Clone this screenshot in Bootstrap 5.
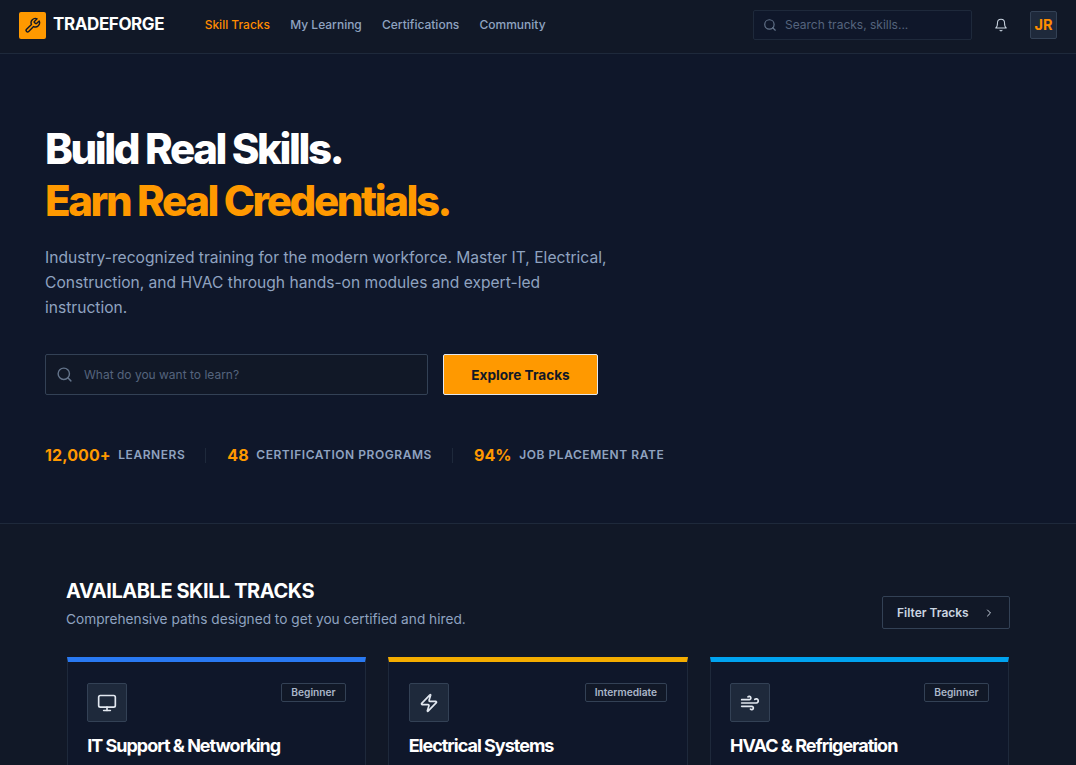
<!DOCTYPE html>
<html lang="en">
<head>
  <meta charset="UTF-8" />
  <meta name="viewport" content="width=device-width, initial-scale=1.0" />
  <title>TradeForge</title>
  <link href="https://cdn.jsdelivr.net/npm/bootstrap@5.3.0/dist/css/bootstrap.min.css" rel="stylesheet">
  <style>
    html, body { height: 765px; overflow: hidden; }
    body {
      font-family: Inter, "Liberation Sans", sans-serif;
      background: #111827;
      color: #8fa3c0;
    }
    .tf-nav {
      height: 54px;
      background: #111827;
      border-bottom: 1px solid #1e293b;
      padding: 0 19px 3px 19px;
    }
    .tf-logo {
      width: 27px;
      height: 27px;
      background: #ff9900;
      border-radius: 2px;
      color: #111827;
    }
    .tf-brand {
      color: #fff;
      font-size: 17px;
      font-weight: 700;
      letter-spacing: -0.4px;
      margin-left: 7px;
      margin-right: 40.5px;
    }
    .tf-navlinks { gap: 20.2px; }
    .tf-navlinks a {
      color: #8fa3c0;
      font-size: 12px;
      font-weight: 500;
      text-decoration: none;
    }
    .tf-navlinks a.on { color: #ff8c00; }
    .tf-search {
      width: 219px;
      height: 30px;
      background: #0f172a;
      border: 1px solid #1e293b;
      border-radius: 2px;
      padding-left: 9px;
      gap: 8px;
      font-size: 12px;
      color: #55647d;
    }
    .tf-avatar {
      width: 27px;
      height: 28px;
      background: #1e293b;
      border: 1px solid #334155;
      border-radius: 2px;
      color: #ff8c00;
      font-size: 14.5px;
      font-weight: 700;
      margin-left: 22px;
    }
    .tf-bell { margin-left: 22px; color: #cbd5e1; }
    .tf-hero {
      height: 470px;
      background: #0f172a;
      border-bottom: 1px solid #1e293b;
      padding: 69px 45px 0;
    }
    .tf-title {
      font-size: 42px;
      line-height: 52px;
      font-weight: 800;
      letter-spacing: -2.4px;
      color: #fff;
      margin: 0 0 18px;
    }
    .tf-title span { color: #ff9900; display: block; }
    .tf-lead {
      width: 570px;
      font-size: 15.6px;
      line-height: 25px;
      color: #8fa3c0;
      margin: 0 0 34px;
    }
    .tf-bigsearch {
      width: 383px;
      height: 41px;
      background: #111827;
      border: 1px solid #334155;
      border-radius: 2px;
      padding-left: 10px;
      gap: 11px;
      font-size: 12px;
      color: #55647d;
    }
    .tf-explore {
      width: 155px;
      height: 41px;
      margin-left: 15px;
      padding: 1px 0 0;
      background: #ff9900;
      border: 1px solid #e2e8f0;
      border-radius: 2px;
      color: #111827;
      font-size: 13.6px;
      font-weight: 700;
    }
    .tf-stats { margin-top: 48px; }
    .tf-num {
      color: #ff9900;
      font-size: 16px;
      font-weight: 700;
      letter-spacing: 0.1px;
      margin-right: 7.5px;
    }
    .tf-lbl {
      font-size: 12px;
      font-weight: 600;
      letter-spacing: 0.55px;
      text-transform: uppercase;
    }
    .tf-sep {
      width: 1px;
      height: 15px;
      background: #1e293b;
      margin: 0 21px 0 20px;
    }
    .tf-tracks { padding: 54px 66px 0; }
    .tf-head { width: 944px; }
    .tf-h2 {
      font-size: 20px;
      font-weight: 700;
      letter-spacing: -0.45px;
      color: #fff;
      text-transform: uppercase;
      line-height: 26px;
      margin: 0 0 5px;
    }
    .tf-sub { font-size: 13.7px; line-height: 20px; margin: 0; }
    .tf-filter {
      width: 128px;
      height: 33px;
      margin-top: 18px;
      background: transparent;
      border: 1px solid #334155;
      border-radius: 2px;
      color: #cbd5e1;
      font-size: 12px;
      font-weight: 600;
      padding: 0 14px;
    }
    .tf-grid {
      display: grid;
      grid-template-columns: repeat(3, 1fr);
      gap: 22px;
      margin: 28px 0 0 0.7px;
      width: 942.4px;
    }
    .tf-card {
      height: 200px;
      background: #0f172a;
      border: 1px solid #1e293b;
      border-top: 5px solid #2979f2;
      border-radius: 0;
      padding: 21px 19.5px;
    }
    .tf-card.amber { border-top-color: #f5ad00; }
    .tf-card.sky { border-top-color: #00a3f0; }
    .tf-ico {
      width: 40px;
      height: 39px;
      background: #1e293b;
      border: 1px solid #334155;
      border-radius: 2px;
      color: #e2e8f0;
    }
    .tf-level {
      height: 19px;
      padding: 0 9px;
      background: #111827;
      border: 1px solid #334155;
      border-radius: 2px;
      color: #aab6c9;
      font-size: 10.2px;
      font-weight: 600;
    }
    .tf-cardtitle {
      font-size: 18px;
      font-weight: 700;
      letter-spacing: -1px;
      color: #fff;
      line-height: 24px;
      margin: 12px 0 0;
    }
  </style>
</head>
<body>
<nav class="tf-nav d-flex align-items-center">
  <span class="tf-logo d-flex align-items-center justify-content-center">
    <svg width="17" height="17" viewBox="0 0 24 24" fill="none" stroke="currentColor" stroke-width="2" stroke-linecap="round" stroke-linejoin="round"><path d="M14.7 6.3a1 1 0 0 0 0 1.4l1.6 1.6a1 1 0 0 0 1.4 0l3.77-3.77a6 6 0 0 1-7.94 7.94l-6.91 6.91a2.12 2.12 0 0 1-3-3l6.91-6.91a6 6 0 0 1 7.94-7.94l-3.76 3.76z"/></svg>
  </span>
  <span class="tf-brand">TRADEFORGE</span>
  <div class="tf-navlinks d-flex">
    <a class="on" href="#">Skill Tracks</a>
    <a href="#">My Learning</a>
    <a href="#">Certifications</a>
    <a href="#">Community</a>
  </div>
  <div class="tf-search d-flex align-items-center ms-auto">
    <svg width="14" height="14" viewBox="0 0 24 24" fill="none" stroke="#64748b" stroke-width="2" stroke-linecap="round"><circle cx="11" cy="11" r="8"/><path d="m21 21-4.3-4.3"/></svg>
    <span>Search tracks, skills...</span>
  </div>
  <span class="tf-bell d-flex">
    <svg width="14" height="14" viewBox="0 0 24 24" fill="none" stroke="currentColor" stroke-width="1.75" stroke-linecap="round" stroke-linejoin="round"><path d="M6 8a6 6 0 0 1 12 0c0 7 3 9 3 9H3s3-2 3-9"/><path d="M10.3 21a1.94 1.94 0 0 0 3.4 0"/></svg>
  </span>
  <span class="tf-avatar d-flex align-items-center justify-content-center">JR</span>
</nav>

<section class="tf-hero">
  <h1 class="tf-title">Build Real Skills.<span>Earn Real Credentials.</span></h1>
  <p class="tf-lead">Industry-recognized training for the modern workforce. Master IT, Electrical, Construction, and HVAC through hands-on modules and expert-led instruction.</p>
  <div class="d-flex">
    <div class="tf-bigsearch d-flex align-items-center">
      <svg width="17" height="17" viewBox="0 0 24 24" fill="none" stroke="#64748b" stroke-width="2" stroke-linecap="round"><circle cx="11" cy="11" r="8"/><path d="m21 21-4.3-4.3"/></svg>
      <span>What do you want to learn?</span>
    </div>
    <button class="tf-explore btn">Explore Tracks</button>
  </div>
  <div class="tf-stats d-flex align-items-center">
    <span class="tf-num">12,000+</span><span class="tf-lbl">Learners</span>
    <span class="tf-sep"></span>
    <span class="tf-num">48</span><span class="tf-lbl">Certification Programs</span>
    <span class="tf-sep"></span>
    <span class="tf-num">94%</span><span class="tf-lbl">Job Placement Rate</span>
  </div>
</section>

<section class="tf-tracks">
  <div class="tf-head d-flex justify-content-between">
    <div>
      <h2 class="tf-h2">Available Skill Tracks</h2>
      <p class="tf-sub">Comprehensive paths designed to get you certified and hired.</p>
    </div>
    <button class="tf-filter btn d-flex align-items-center justify-content-between">
      Filter Tracks
      <svg width="12" height="12" viewBox="0 0 24 24" fill="none" stroke="currentColor" stroke-width="2" stroke-linecap="round" stroke-linejoin="round"><path d="m9 18 6-6-6-6"/></svg>
    </button>
  </div>
  <div class="tf-grid">
    <div class="tf-card">
      <div class="d-flex justify-content-between align-items-start">
        <span class="tf-ico d-flex align-items-center justify-content-center">
          <svg width="20" height="20" viewBox="0 0 24 24" fill="none" stroke="currentColor" stroke-width="2" stroke-linecap="round" stroke-linejoin="round"><rect width="20" height="14" x="2" y="3" rx="2"/><path d="M8 21h8"/><path d="M12 17v4"/></svg>
        </span>
        <span class="tf-level d-flex align-items-center">Beginner</span>
      </div>
      <h3 class="tf-cardtitle">IT Support &amp; Networking</h3>
    </div>
    <div class="tf-card amber">
      <div class="d-flex justify-content-between align-items-start">
        <span class="tf-ico d-flex align-items-center justify-content-center">
          <svg width="20" height="20" viewBox="0 0 24 24" fill="none" stroke="currentColor" stroke-width="2" stroke-linecap="round" stroke-linejoin="round"><path d="M4 14a1 1 0 0 1-.78-1.63l9.9-10.2a.5.5 0 0 1 .86.46l-1.92 6.02A1 1 0 0 0 13 10h7a1 1 0 0 1 .78 1.63l-9.9 10.2a.5.5 0 0 1-.86-.46l1.92-6.02A1 1 0 0 0 11 14z"/></svg>
        </span>
        <span class="tf-level d-flex align-items-center">Intermediate</span>
      </div>
      <h3 class="tf-cardtitle">Electrical Systems</h3>
    </div>
    <div class="tf-card sky">
      <div class="d-flex justify-content-between align-items-start">
        <span class="tf-ico d-flex align-items-center justify-content-center">
          <svg width="20" height="20" viewBox="0 0 24 24" fill="none" stroke="currentColor" stroke-width="2" stroke-linecap="round" stroke-linejoin="round"><path d="M17.7 7.7a2.5 2.5 0 1 1 1.8 4.3H2"/><path d="M9.6 4.6A2 2 0 1 1 11 8H2"/><path d="M12.6 19.4A2 2 0 1 0 14 16H2"/></svg>
        </span>
        <span class="tf-level d-flex align-items-center">Beginner</span>
      </div>
      <h3 class="tf-cardtitle">HVAC &amp; Refrigeration</h3>
    </div>
  </div>
</section>
<script src="https://cdn.jsdelivr.net/npm/bootstrap@5.3.0/dist/js/bootstrap.bundle.min.js"></script>
</body>
</html>
